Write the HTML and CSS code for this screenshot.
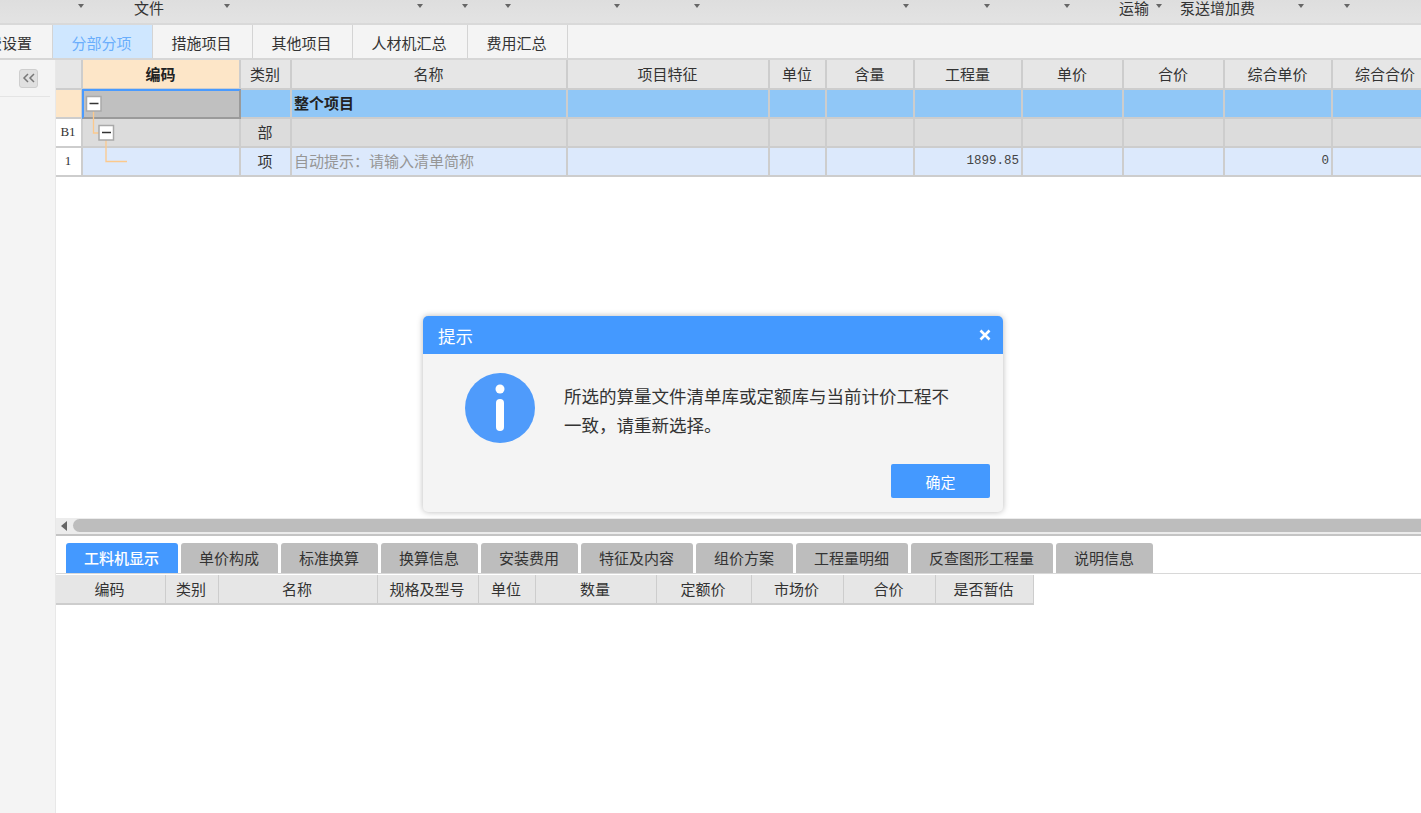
FILE: index.html
```html
<!DOCTYPE html>
<html lang="zh-CN">
<head>
<meta charset="utf-8">
<title>提示</title>
<link rel="stylesheet" href="styles.css">
</head>
<body>
<div class="app">
  <div class="toolbar">
    <span class="arrow"></span><span class="tool">文件</span><span class="arrow"></span><span class="arrow"></span><span class="arrow"></span><span class="arrow"></span><span class="arrow"></span><span class="arrow"></span><span class="arrow"></span><span class="arrow"></span><span class="arrow"></span><span class="tool">运输</span><span class="arrow"></span><span class="tool">泵送增加费</span><span class="arrow"></span><span class="arrow"></span>
  </div>
  <div class="tabs">
    <div class="tab tab-clip">取费设置</div>
    <div class="tab active">分部分项</div>
    <div class="tab">措施项目</div>
    <div class="tab">其他项目</div>
    <div class="tab tab-wide">人材机汇总</div>
    <div class="tab">费用汇总</div>
  </div>
  <div class="body">
    <aside class="side">
      <div class="side-head">
        <button class="collapse" type="button">
          <svg width="14" height="10" viewBox="0 0 14 10"><path d="M6 1 2 5l4 4M12 1 8 5l4 4" fill="none" stroke="#777" stroke-width="1.500"/></svg>
        </button>
      </div>
    </aside>
    <main class="main">
      <div class="sheet">
        <div class="row head">
          <div class="cell"></div><div class="cell code-head">编码</div><div class="cell">类别</div><div class="cell">名称</div><div class="cell">项目特征</div><div class="cell">单位</div><div class="cell">含量</div><div class="cell">工程量</div><div class="cell">单价</div><div class="cell">合价</div><div class="cell">综合单价</div><div class="cell">综合合价</div>
        </div>
        <div class="row r-project">
          <div class="cell num-orange"></div><div class="cell selected"></div><div class="cell"></div><div class="cell left strong">整个项目</div><div class="cell"></div><div class="cell"></div><div class="cell"></div><div class="cell"></div><div class="cell"></div><div class="cell"></div><div class="cell"></div><div class="cell"></div>
        </div>
        <div class="row r-part">
          <div class="cell num">B1</div><div class="cell"></div><div class="cell">部</div><div class="cell"></div><div class="cell"></div><div class="cell"></div><div class="cell"></div><div class="cell"></div><div class="cell"></div><div class="cell"></div><div class="cell"></div><div class="cell"></div>
        </div>
        <div class="row r-item">
          <div class="cell num">1</div><div class="cell"></div><div class="cell">项</div><div class="cell left hint">自动提示：请输入清单简称</div><div class="cell"></div><div class="cell"></div><div class="cell"></div><div class="cell value">1899.85</div><div class="cell"></div><div class="cell"></div><div class="cell value">0</div><div class="cell"></div>
        </div>
        <svg class="tree" width="60" height="90" viewBox="0 0 60 90">
          <path d="M10.500 20V43H16M23 48V71.500H44" fill="none" stroke="#fcc98c" stroke-width="1.300"/>
          <rect x="3.500" y="6.500" width="14.500" height="14.500" fill="#fff" stroke="#a9a9a9" stroke-width="1.500"/>
          <path d="M6.500 13.500h9" stroke="#333" stroke-width="1.500"/>
          <rect x="16" y="35.500" width="14.500" height="14.500" fill="#fff" stroke="#a9a9a9" stroke-width="1.500"/>
          <path d="M19 42.500h9" stroke="#333" stroke-width="1.500"/>
        </svg>
      </div>
      <div class="scroll">
        <span class="scroll-left"></span>
        <div class="thumb"></div>
      </div>
      <div class="bottom-tabs">
        <div class="btab b112 on">工料机显示</div>
        <div class="btab b97">单价构成</div>
        <div class="btab b97">标准换算</div>
        <div class="btab b97">换算信息</div>
        <div class="btab b97">安装费用</div>
        <div class="btab b112">特征及内容</div>
        <div class="btab b97">组价方案</div>
        <div class="btab b112">工程量明细</div>
        <div class="btab b142">反查图形工程量</div>
        <div class="btab b97">说明信息</div>
      </div>
      <div class="sub-head">
        <div class="cell">编码</div><div class="cell">类别</div><div class="cell">名称</div><div class="cell">规格及型号</div><div class="cell">单位</div><div class="cell">数量</div><div class="cell">定额价</div><div class="cell">市场价</div><div class="cell">合价</div><div class="cell">是否暂估</div>
      </div>
    </main>
  </div>
  <div class="dialog">
    <div class="dialog-title">
      <span>提示</span>
      <svg class="close" width="12" height="12" viewBox="0 0 12 12"><path d="M1.500 1.500l9 9M10.500 1.500l-9 9" stroke="#fff" stroke-width="2.600"/></svg>
    </div>
    <div class="dialog-body">
      <svg class="info" width="70" height="70" viewBox="0 0 70 70">
        <circle cx="35" cy="35" r="35" fill="#4f9bfb"/>
        <circle cx="35" cy="16" r="4.500" fill="#fff"/>
        <rect x="31" y="26" width="8" height="32" rx="4" fill="#fff"/>
      </svg>
      <p class="message">所选的算量文件清单库或定额库与当前计价工程不一致，请重新选择。</p>
    </div>
    <div class="dialog-foot">
      <button class="ok" type="button">确定</button>
    </div>
  </div>
</div>
</body>
</html>
```
FILE: styles.css
```css
* { box-sizing: border-box; }
html, body { margin: 0; height: 100%; overflow: hidden; }
body {
  background: #fff;
  color: #333;
  font-family: "Noto Sans CJK SC", "Noto Sans", sans-serif;
  font-size: 15px;
}
.app { position: relative; display: flex; flex-direction: column; width: 1421px; height: 813px; overflow: hidden; }

.toolbar {
  flex: none;
  height: 25px;
  display: grid;
  grid-template-columns: 84px 80px 66px 193px 45px 43px 109px 80px 209px 81px 80px 79px 13px 93px 49px 46px;
  justify-items: end;
  align-items: start;
  background: linear-gradient(#dedede, #e3e3e3);
  border-bottom: 2px solid #d9d9d9;
}
.tool { line-height: 15px; white-space: nowrap; }
.arrow {
  width: 0;
  height: 0;
  margin-top: 4px;
  border-left: 3.500px solid transparent;
  border-right: 3.500px solid transparent;
  border-top: 4px solid #666;
}

.tabs {
  flex: none;
  height: 35px;
  display: flex;
  background: #f4f4f4;
  border-bottom: 2px solid #d6d6d6;
}
.tab {
  width: 100px;
  display: flex;
  align-items: center;
  justify-content: center;
  padding: 2px 2px 0 0;
  border-right: 1px solid #d4d4d4;
  white-space: nowrap;
}
.tab-clip { width: 53px; justify-content: flex-end; padding-right: 20px; }
.tab-wide { width: 115px; }
.tab.active { background: #cfe7ff; color: #6aaefc; }

.body { flex: 1; display: flex; min-height: 0; }
.side { flex: none; width: 56px; background: #f4f4f4; border-right: 1px solid #e8e8e8; }
.side-head { height: 37px; display: flex; justify-content: flex-end; align-items: center; padding-right: 12px; margin-right: 5px; border-bottom: 1px solid #e4e4e4; }
.collapse {
  width: 19px;
  height: 19px;
  padding: 0;
  display: flex;
  align-items: center;
  justify-content: center;
  background: #e0e0e0;
  border: 1px solid #cecece;
  border-radius: 3px;
}

.main { flex: 1; min-width: 0; display: flex; flex-direction: column; }
.sheet { position: relative; flex: none; height: 458px; }
.row, .sub-head { display: grid; }
.row {
  width: 1384px;
  height: 29px;
  grid-template-columns: 27px 158px 51px 276px 202px 57px 88px 108px 101px 101px 108px 107px;
}
.cell {
  display: flex;
  align-items: center;
  justify-content: center;
  padding: 0 1px 2px 0;
  border-right: 2px solid #cdcdcd;
  border-bottom: 2px solid #cdcdcd;
  white-space: nowrap;
  min-width: 0;
}
.head { height: 30px; background: #e6e6e6; }
.code-head { background: #fde6c8; font-weight: 700; color: #222; }
.r-project { background: #90c7f7; }
.r-part { background: #dcdcdc; }
.r-item { background: #dce9fc; }
.num { background: #fff; font-family: "Liberation Serif", serif; font-size: 13px; }
.num-orange { background: #fde6c8; }
.selected {
  background: #c0c0c0;
  margin: -1px 0 0 -1px;
  border: 2px solid #9a9a9a;
  border-top-color: #4a9bff;
  border-left-color: #4a9bff;
}
.left { justify-content: flex-start; padding-left: 2px; }
.strong { font-weight: 700; color: #222; }
.hint { color: #969696; }
.value { justify-content: flex-end; padding-right: 2px; font-family: "Liberation Mono", monospace; font-size: 12.500px; color: #444; }
.tree { position: absolute; left: 27px; top: 30px; }

.scroll { flex: none; height: 18px; display: flex; align-items: center; gap: 6px; padding: 1px 0 2px 5px; background: #ececec; border-bottom: 2px solid #c4c4c4; }
.scroll-left { width: 0; height: 0; border-top: 5px solid transparent; border-bottom: 5px solid transparent; border-right: 6px solid #666; }
.thumb { flex: 1; height: 13px; border-radius: 7px 0 0 7px; background: #bdbdbd; }

.bottom-tabs { flex: none; display: flex; gap: 3px; height: 38px; padding: 7px 0 0 10px; border-bottom: 1px solid #d8d8d8; }
.btab {
  height: 30px;
  display: flex;
  align-items: center;
  justify-content: center;
  padding: 0 1px 2px 0;
  background: #bdbdbd;
  border-radius: 3px 3px 0 0;
  white-space: nowrap;
}
.btab.on { background: #4499ff; color: #fff; font-weight: 500; }
.b97 { width: 97px; }
.b112 { width: 112px; }
.b142 { width: 142px; }

.sub-head {
  width: 978px;
  height: 30px;
  margin-top: 1px;
  background: #e6e6e6;
  grid-template-columns: 110px 53px 159px 101px 57px 121px 95px 92px 92px 98px;
}
.sub-head .cell { border-right-width: 1px; padding-right: 2px; }

.dialog {
  position: absolute;
  left: 423px;
  top: 316px;
  width: 580px;
  height: 196px;
  display: flex;
  flex-direction: column;
  background: #f4f4f4;
  border-radius: 5px;
  box-shadow: 0 0 6px rgba(0, 0, 0, .28);
  overflow: hidden;
}
.dialog-title {
  flex: none;
  height: 38px;
  display: flex;
  align-items: center;
  justify-content: space-between;
  padding: 0 12px 0 15px;
  background: #4499ff;
  color: #fff;
  font-size: 17.500px;
}
.dialog-body { flex: 1; display: flex; padding: 19px 0 0 42px; }
.info { flex: none; }
.message { width: 400px; margin: 8px 0 0 29px; font-size: 17.500px; line-height: 29px; color: #333; }
.dialog-foot { flex: none; display: flex; justify-content: flex-end; padding: 0 13px 14px 0; }
.ok {
  width: 99px;
  height: 34px;
  padding: 0;
  border: 0;
  border-radius: 2px;
  background: #4499ff;
  color: #fff;
  font: inherit;
}
```
